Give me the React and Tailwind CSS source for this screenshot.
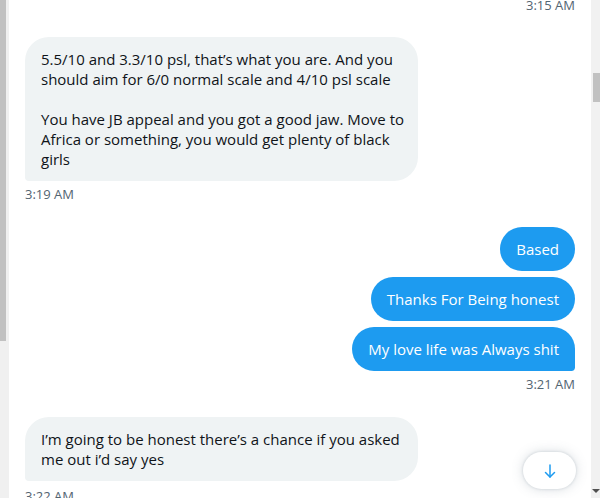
import React from "react";

const font = { fontFamily: '"Open Sans", "Noto Sans", sans-serif' };

function Received({ lines }) {
  return (
    <div className="w-[393px] rounded-t-[24px] rounded-br-[24px] rounded-bl-[4px] bg-[#eff3f4] px-4 py-3 text-[15px] leading-5 text-[#0f1419]">
      {lines.map((l, i) => (
        <div key={i} className="whitespace-nowrap">{l === "" ? "\u00a0" : l}</div>
      ))}
    </div>
  );
}

function Sent({ text, last }) {
  return (
    <div
      className={
        "self-end bg-[#1d9bf0] px-4 py-3 text-[15px] leading-5 font-medium text-white whitespace-nowrap " +
        (last ? "rounded-t-[24px] rounded-bl-[24px] rounded-br-[4px]" : "rounded-[24px]")
      }
    >
      {text}
    </div>
  );
}

export default function App() {
  return (
    <div className="flex h-[498px] w-[600px] overflow-hidden bg-white" style={font}>
      <div className="flex h-full w-[9px] shrink-0 flex-col bg-[#f0f0f0]">
        <div className="h-[341px] w-[6px] bg-[#c1c1c1]" />
      </div>
      <div className="relative flex-1 overflow-hidden">
        <div className="-mt-[3px] flex flex-col px-4">
          <div className="self-end text-[13px] leading-4 text-[#536471]">3:15 AM</div>
          <div className="mt-[24px]">
            <Received
              lines={[
                "5.5/10 and 3.3/10 psl, that’s what you are. And you",
                "should aim for 6/0 normal scale and 4/10 psl scale",
                "",
                "You have JB appeal and you got a good jaw. Move to",
                "Africa or something, you would get plenty of black",
                "girls",
              ]}
            />
          </div>
          <div className="mt-[5px] text-[13px] leading-4 text-[#536471]">3:19 AM</div>
          <div className="mt-[25px] flex flex-col gap-[6px]">
            <Sent text="Based" />
            <Sent text="Thanks For Being honest" />
            <Sent text="My love life was Always shit" last />
          </div>
          <div className="mt-[5px] self-end text-[13px] leading-4 text-[#536471]">3:21 AM</div>
          <div className="mt-[25px]">
            <Received
              lines={[
                "I’m going to be honest there’s a chance if you asked",
                "me out i’d say yes",
              ]}
            />
          </div>
          <div className="mt-[7px] text-[13px] leading-4 text-[#536471]">3:22 AM</div>
        </div>
        <div className="absolute left-[514px] top-[452px] flex h-[37px] w-[53px] items-center justify-center rounded-full bg-white shadow-[0_0_12px_rgba(101,119,134,0.25),0_0_2px_1px_rgba(101,119,134,0.12)]">
          <svg width="16" height="16" viewBox="0 0 16 16" fill="none" stroke="#1d9bf0" strokeWidth="1.5" strokeLinecap="round" strokeLinejoin="round">
            <path d="M8 2v12" />
            <path d="M3.5 9.5 8 14l4.5-4.5" />
          </svg>
        </div>
      </div>
      <div className="flex h-full w-[9px] shrink-0 flex-col items-end bg-[#f1f1f1]">
        <div className="mt-[73px] h-[29px] w-[7px] bg-[#c1c1c1]" />
        <div className="mt-auto mb-[5px] mr-0 h-0 w-0 border-l-[4px] border-r-[4px] border-t-[4px] border-l-transparent border-r-transparent border-t-[#505050]" />
      </div>
    </div>
  );
}
